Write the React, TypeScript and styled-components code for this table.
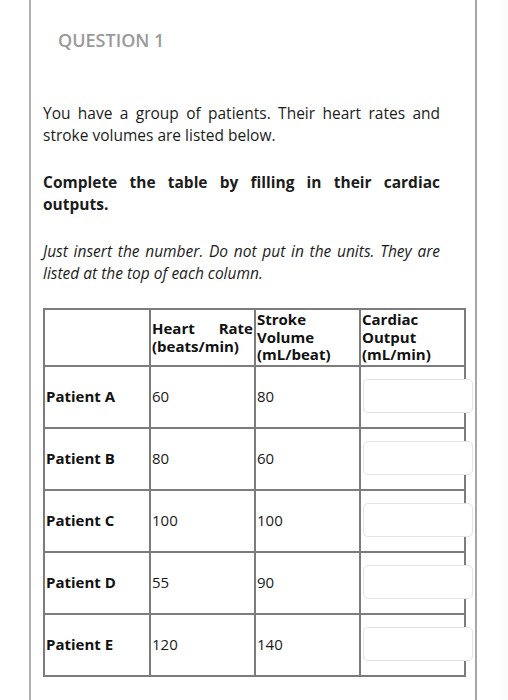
import styled, { createGlobalStyle } from 'styled-components';

const GlobalStyle = createGlobalStyle`
  body {
    margin: 0;
    background: #ffffff;
    font-family: 'Open Sans', 'Liberation Sans', sans-serif;
    color: #1a1a1a;
  }
`;

interface PatientRow {
  name: string;
  heartRate: number;
  strokeVolume: number;
}

const patients: PatientRow[] = [
  { name: 'Patient A', heartRate: 60, strokeVolume: 80 },
  { name: 'Patient B', heartRate: 80, strokeVolume: 60 },
  { name: 'Patient C', heartRate: 100, strokeVolume: 100 },
  { name: 'Patient D', heartRate: 55, strokeVolume: 90 },
  { name: 'Patient E', heartRate: 120, strokeVolume: 140 }
];

export default function App() {
  return (
    <>
      <GlobalStyle />
      <Page>
        <Card>
          <Title>QUESTION 1</Title>
          <Body>
            <Paragraph>
              You have a group of patients. Their heart rates and stroke volumes
              are listed below.
            </Paragraph>
            <Paragraph bold>
              Complete the table by filling in their cardiac outputs.
            </Paragraph>
            <Paragraph italic>
              Just insert the number. Do not put in the units. They are listed
              at the top of each column.
            </Paragraph>
          </Body>
          <Table>
            <colgroup>
              <col style={{ width: 106 }} />
              <col style={{ width: 105 }} />
              <col style={{ width: 105 }} />
              <col style={{ width: 105 }} />
            </colgroup>
            <thead>
              <tr>
                <HeadCell />
                <HeadCell>Heart Rate (beats/min)</HeadCell>
                <HeadCell>Stroke Volume (mL/beat)</HeadCell>
                <HeadCell>Cardiac Output (mL/min)</HeadCell>
              </tr>
            </thead>
            <tbody>
              {patients.map((p) => (
                <Row key={p.name}>
                  <NameCell>{p.name}</NameCell>
                  <ValueCell>{p.heartRate}</ValueCell>
                  <ValueCell>{p.strokeVolume}</ValueCell>
                  <InputCell>
                    <AnswerInput type='text' />
                  </InputCell>
                </Row>
              ))}
            </tbody>
          </Table>
        </Card>
      </Page>
    </>
  );
}

const Page = styled.div`
  height: 700px;
  overflow: hidden;
  background: linear-gradient(to right, #ffffff 0, #ffffff 497px, #fafafa 508px);
`;

const Card = styled.div`
  box-sizing: border-box;
  margin-left: 29px;
  width: 448px;
  min-height: 760px;
  background: #ffffff;
  border-left: 2px solid #b0b0b0;
  border-right: 2px solid #a6a6a6;
  padding: 28px 12px 0 12px;
`;

const Title = styled.div`
  padding-left: 15px;
  font-size: 18px;
  font-weight: 600;
  line-height: 24px;
  color: #9a9a9a;
`;

const Body = styled.div`
  margin-top: 50px;
  width: 397px;
`;

const Paragraph = styled.p<{ bold?: boolean; italic?: boolean }>`
  margin: 0 0 25px 0;
  font-size: 15.5px;
  line-height: 22px;
  text-align: justify;
  font-weight: ${(p) => (p.bold ? 700 : 400)};
  font-style: ${(p) => (p.italic ? 'italic' : 'normal')};
  color: #1c1c1c;

  &:last-child {
    margin-bottom: 24px;
  }
`;

const Table = styled.table`
  border-collapse: collapse;
  table-layout: fixed;
  width: 421px;
  font-size: 15px;
`;

const HeadCell = styled.th`
  border: 2px solid #7c7c7c;
  height: 53px;
  padding: 1px 1px;
  font-weight: 700;
  line-height: 17.5px;
  text-align: justify;
  vertical-align: middle;
  color: #111;
`;

const Row = styled.tr`
  height: 62px;
`;

const NameCell = styled.td`
  border: 2px solid #7c7c7c;
  padding: 0 1px 2px 1px;
  font-weight: 700;
  vertical-align: middle;
  color: #111;
`;

const ValueCell = styled.td`
  border: 2px solid #7c7c7c;
  padding: 0 1px 2px 1px;
  vertical-align: middle;
  color: #1a1a1a;
`;

const InputCell = styled.td`
  border: 2px solid #7c7c7c;
  padding: 0 2px 2px 2px;
  vertical-align: middle;
`;

const AnswerInput = styled.input`
  position: relative;
  z-index: 1;
  box-sizing: border-box;
  display: block;
  width: 110px;
  height: 34px;
  border: 1px solid #e4e4e4;
  border-radius: 5px;
  background: #ffffff;
  outline: none;
`;
